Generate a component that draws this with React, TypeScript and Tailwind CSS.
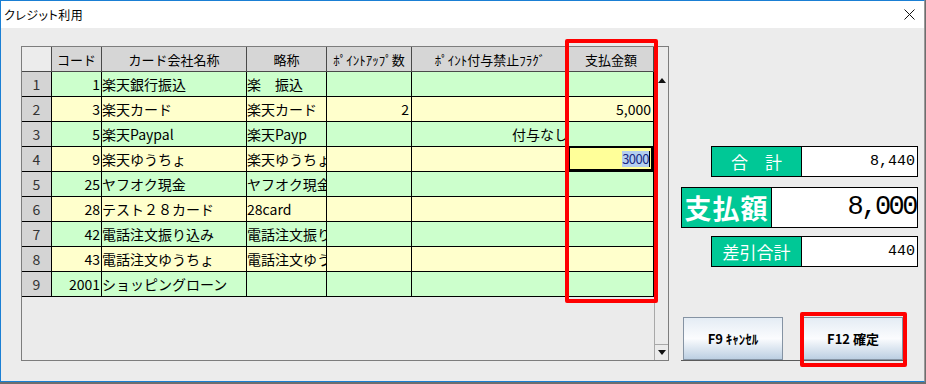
import React from 'react';

interface Row {
  no: number;
  code: string;
  name: string;
  short: string;
  point: string;
  flag: string;
  pay: string;
  editing?: boolean;
}

const rows: Row[] = [
  { no: 1, code: '1', name: '楽天銀行振込', short: '楽　振込', point: '', flag: '', pay: '' },
  { no: 2, code: '3', name: '楽天カード', short: '楽天カード', point: '2', flag: '', pay: '5,000' },
  { no: 3, code: '5', name: '楽天Paypal', short: '楽天Payp', point: '', flag: '付与なし', pay: '' },
  { no: 4, code: '9', name: '楽天ゆうちょ', short: '楽天ゆうちょ', point: '', flag: '', pay: '3000', editing: true },
  { no: 5, code: '25', name: 'ヤフオク現金', short: 'ヤフオク現金', point: '', flag: '', pay: '' },
  { no: 6, code: '28', name: 'テスト２８カード', short: '28card', point: '', flag: '', pay: '' },
  { no: 7, code: '42', name: '電話注文振り込み', short: '電話注文振り込み', point: '', flag: '', pay: '' },
  { no: 8, code: '43', name: '電話注文ゆうちょ', short: '電話注文ゆうちょ', point: '', flag: '', pay: '' },
  { no: 9, code: '2001', name: 'ショッピングローン', short: '', point: '', flag: '', pay: '' },
];

const headers = ['コード', 'カード会社名称', '略称', 'ﾎﾟｲﾝﾄｱｯﾌﾟ数', 'ﾎﾟｲﾝﾄ付与禁止ﾌﾗｸﾞ', '支払金額'];

const CreditGrid: React.FC = () => {
  return (
    <div className="w-[648px] h-[315px] border border-[#7d7d7d] bg-[#ebebeb] flex">
      {/* Table */}
      <div className="w-[632px] grid grid-cols-[30px_50px_145px_80px_85px_157px_85px] auto-rows-[25px] self-start text-[14px] leading-none text-black">
        <div className="bg-[#ececec] border-r border-b border-[#4a4a4a]" />
        {headers.map((h) => (
          <div
            key={h}
            className="bg-[#d6d6d6] border-r border-b border-[#4a4a4a] flex items-center justify-center text-[13px] whitespace-nowrap overflow-hidden"
          >
            {h}
          </div>
        ))}

        {rows.map((r) => {
          const bg = r.no % 2 === 1 ? 'bg-[#ccffcc]' : 'bg-[#ffffcc]';
          return (
            <React.Fragment key={r.no}>
              <div className="bg-[#d4d4d4] border-r border-b border-black flex items-center justify-center text-[#333333]">
                {r.no}
              </div>
              <div className={`${bg} border-r border-b border-black flex items-center justify-end pr-[1px]`}>
                {r.code}
              </div>
              <div className={`${bg} border-r border-b border-black flex items-center whitespace-nowrap overflow-hidden`}>
                {r.name}
              </div>
              <div className={`${bg} border-r border-b border-black flex items-center whitespace-nowrap overflow-hidden`}>
                {r.short}
              </div>
              <div className={`${bg} border-r border-b border-black flex items-center justify-end pr-[2px]`}>
                {r.point}
              </div>
              <div className={`${bg} border-r border-b border-black flex items-center justify-end whitespace-nowrap overflow-visible`}>
                {r.flag}
              </div>
              <div className={`${bg} relative border-r border-b border-black flex items-center justify-end pr-[2px]`}>
                {r.editing ? (
                  <div className="absolute left-[-1px] top-[-1px] right-0 bottom-0 border-2 border-black bg-[#ffff99] flex items-center justify-end pr-[1px]">
                    <span className="bg-[#b4cff0] text-[#1a2a80] text-[13px] leading-[16px] tracking-[-0.5px]">{r.pay}</span>
                    <span className="w-px h-[16px] bg-black" />
                  </div>
                ) : (
                  r.pay
                )}
              </div>
            </React.Fragment>
          );
        })}
      </div>

      {/* Scrollbar */}
      <div className="w-[14px] flex flex-col">
        <div className="h-[25px]" />
        <div className="flex-1 border-l border-[#a8a8a8] flex flex-col justify-between">
          <div className="h-[16px] flex items-center justify-center">
            <svg width="8" height="5" viewBox="0 0 8 5">
              <path d="M0 5 L4 0 L8 5 Z" fill="#111" />
            </svg>
          </div>
          <div className="h-[16px] border-t border-[#a8a8a8] flex items-center justify-center">
            <svg width="8" height="5" viewBox="0 0 8 5">
              <path d="M0 0 L8 0 L4 5 Z" fill="#111" />
            </svg>
          </div>
        </div>
      </div>
    </div>
  );
};

const SummaryBox: React.FC<{ label: string; value: string; big?: boolean }> = ({ label, value, big }) => {
  if (big) {
    return (
      <div className="w-[237px] h-[41px] border border-black flex bg-white">
        <div className="w-[90px] border-r border-black bg-[#00c896] flex items-center justify-center text-white text-[27px] font-bold tracking-[1px] leading-none">
          支払額
        </div>
        <div className="flex-1 flex items-center justify-end pr-[1px] font-['Liberation_Mono',monospace] text-[27px] tracking-[-2.5px] leading-none text-black">
          {value}
        </div>
      </div>
    );
  }
  return (
    <div className="w-[207px] h-[31px] border border-black flex bg-white">
      <div className="w-[90px] border-r border-black bg-[#00c896] flex items-center justify-center text-white text-[17px] leading-none whitespace-pre">
        {label}
      </div>
      <div className="flex-1 flex items-center justify-end pr-[2px] font-['Liberation_Mono',monospace] text-[15px] leading-none text-black">
        {value}
      </div>
    </div>
  );
};

const App: React.FC = () => {
  return (
    <div className="relative w-[926px] h-[384px] bg-[#6e6e6e] overflow-hidden font-['Noto_Sans_CJK_JP',sans-serif]">
      <div className="w-[925px] h-[382px] bg-[#ececec] border-l border-t border-b border-r border-[#1a7fd4] border-r-[#9a9a9a] flex flex-col">
        {/* Title bar */}
        <div className="h-[27px] bg-white flex items-center justify-between pl-[3px] pr-[9px]">
          <span className="text-[12px] leading-none text-black [font-feature-settings:'palt'] tracking-[0.5px]">
            クレジット利用
          </span>
          <svg width="11" height="11" viewBox="0 0 11 11">
            <path d="M0.5 0.5 L10.5 10.5 M10.5 0.5 L0.5 10.5" stroke="#111" strokeWidth="1" />
          </svg>
        </div>

        {/* Body */}
        <div className="flex-1 flex pl-[20px] pt-[18px]">
          <CreditGrid />

          <div className="flex-1 flex flex-col items-end pr-[6px] pt-[100px]">
            <SummaryBox label={'合　計'} value="8,440" />
            <div className="mt-[10px]">
              <SummaryBox label="支払額" value="8,000" big />
            </div>
            <div className="mt-[8px]">
              <SummaryBox label="差引合計" value="440" />
            </div>

            <div className="mt-[50px] self-start ml-[12px] w-[225px] h-[44px] border-b border-[#5a5a5a] flex items-start gap-[20px] pl-[2px]">
              <button className="w-[100px] h-[43px] border border-[#8593a3] bg-gradient-to-b from-[#e4ecf4] via-[#fbfcfe] to-[#bccfe2] text-[13px] font-bold text-black">
                F9 ｷｬﾝｾﾙ
              </button>
              <button className="w-[100px] h-[43px] border border-[#8593a3] bg-gradient-to-b from-[#e4ecf4] via-[#fbfcfe] to-[#bccfe2] text-[13px] font-bold text-black">
                F12 確定
              </button>
            </div>
          </div>
        </div>
      </div>

      {/* Annotation highlights */}
      <div className="absolute left-[565px] top-[39px] w-[93px] h-[264px] border-4 border-[#ff0000] rounded-[2px] pointer-events-none" />
      <div className="absolute left-[800px] top-[312px] w-[107px] h-[55px] border-4 border-[#ff0000] rounded-[2px] pointer-events-none" />
    </div>
  );
};

export default App;
